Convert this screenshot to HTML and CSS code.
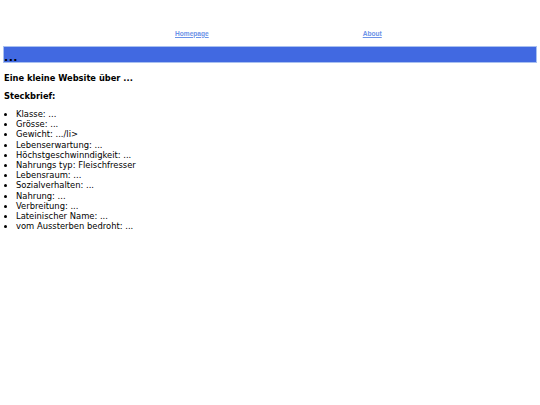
FILE: index.html
```html
<!DOCTYPE html>
<html lang="de">
<head>
<meta charset="utf-8">
<title>Steckbrief</title>
<link rel="stylesheet" href="styles.css">
</head>
<body>
<nav class="nav">
  <a class="nav-link" href="#">Homepage</a>
  <a class="nav-link" href="#">About</a>
</nav>
<header class="banner"><span class="dots">...</span></header>
<main class="content">
  <h1 class="title">Eine kleine Website über ...</h1>
  <h2 class="subtitle">Steckbrief:</h2>
  <ul class="facts">
    <li>Klasse: ...</li>
    <li>Grösse: ...</li>
    <li>Gewicht: .../li&gt;</li>
    <li>Lebenserwartung: ...</li>
    <li>Höchstgeschwinndigkeit: ...</li>
    <li>Nahrungs typ: Fleischfresser</li>
    <li>Lebensraum: ...</li>
    <li>Sozialverhalten: ...</li>
    <li>Nahrung: ...</li>
    <li>Verbreitung: ...</li>
    <li>Lateinischer Name: ...</li>
    <li>vom Aussterben bedroht: ...</li>
  </ul>
</main>
</body>
</html>
```
FILE: styles.css
```css
html, body {
  margin: 0;
  padding: 0;
  background: #fff;
}
body {
  font-family: "DejaVu Sans", Verdana, sans-serif;
  font-size: 8.4px;
  color: #000;
}
.nav {
  display: flex;
  height: 46px;
  align-items: center;
  padding-left: 175px;
  gap: 154px;
  box-sizing: border-box;
  padding-top: 20px;
}
.nav-link {
  font-family: "Liberation Sans", Arial, sans-serif;
  font-size: 6.6px;
  font-weight: bold;
  color: #6c93e8;
}
.banner {
  margin: 0 3px;
  height: 17px;
  background: #4169e1;
  border: 1px solid #a9c0f0;
  display: flex;
  align-items: flex-end;
  box-sizing: border-box;
}
.dots {
  font-weight: bold;
  font-size: 11px;
  line-height: 9px;
  padding-left: 0;
  letter-spacing: 0.5px;
}
.content {
  padding: 0 4px;
}
.title {
  font-size: 8.3px;
  font-weight: bold;
  margin: 8px 0 0;
  line-height: 14px;
}
.subtitle {
  font-size: 8.3px;
  font-weight: bold;
  margin: 5px 0 0;
  line-height: 12px;
}
.facts {
  margin: 7px 0 0;
  padding-left: 12px;
  line-height: 10.2px;
}
```
